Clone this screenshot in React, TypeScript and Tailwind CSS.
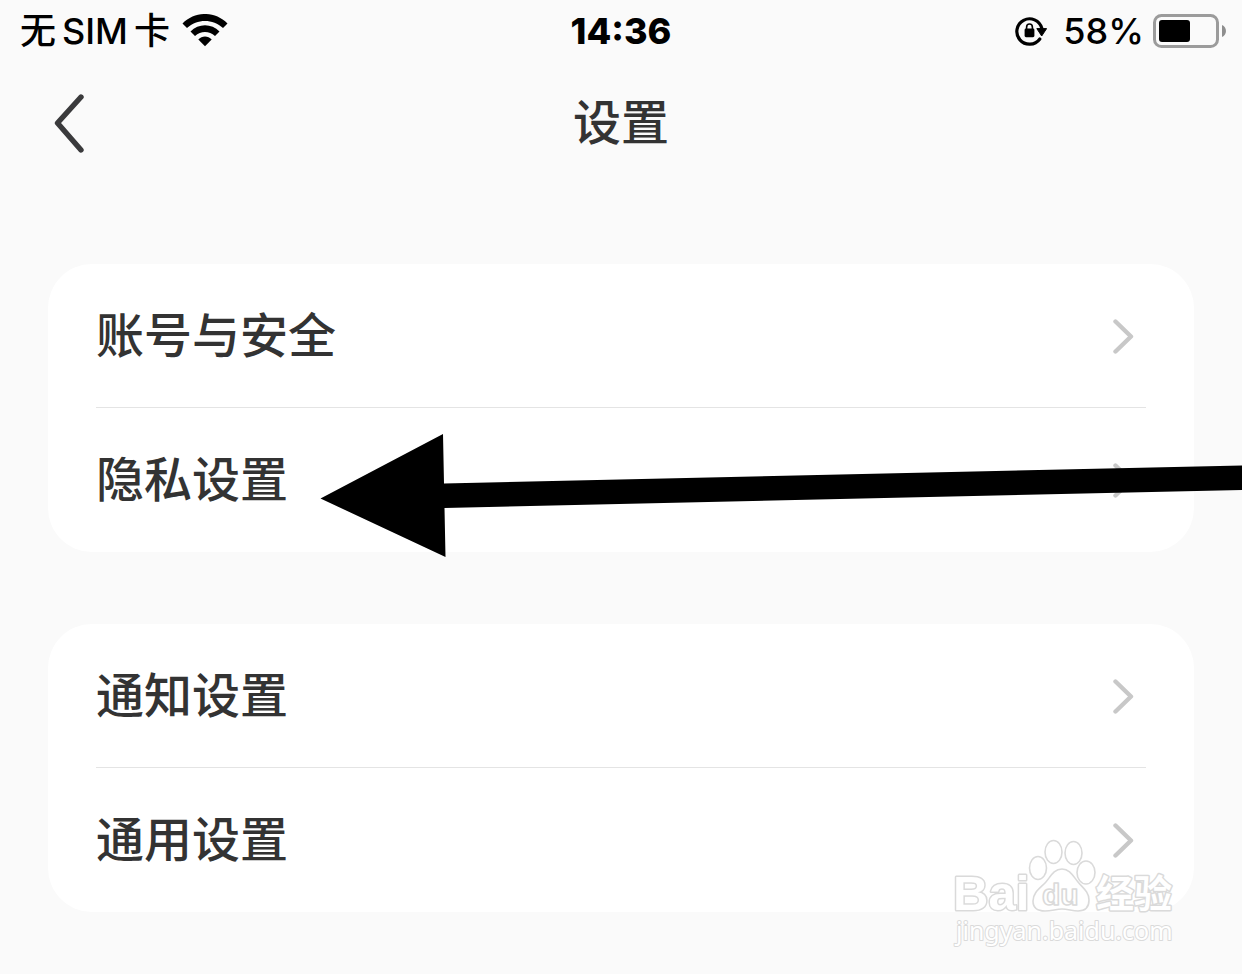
import React from 'react';

type RowItem = {
  label: string;
  href: string;
};

const groups: RowItem[][] = [
  [
    { label: '账号与安全', href: '#account' },
    { label: '隐私设置', href: '#privacy' },
  ],
  [
    { label: '通知设置', href: '#notifications' },
    { label: '通用设置', href: '#general' },
  ],
];

const WifiIcon = () => (
  <svg viewBox="0 0 46 34" className="w-[46px] h-[34px]" aria-hidden="true">
    <path d="M0.5 9.5C13-3.2 33-3.2 45.5 9.5L41 14C31 4.6 15 4.6 5 14Z" />
    <path d="M8.5 17.5C16.5 9.3 29.5 9.3 37.500 17.500L33 22C27.300 16.500 18.700 16.500 13 22Z" />
    <path d="M16.3 25.5C20 21.600 26 21.600 29.700 25.500L23 32.300Z" />
  </svg>
);

const RotationLockIcon = () => (
  <svg viewBox="0 0 32 30" className="w-8 h-[30px]" fill="none" aria-hidden="true">
    <path d="M26.8 12.2A12.7 12.7 0 1 0 24.8 23" stroke="#000" strokeWidth="3.2" strokeLinecap="round" />
    <path d="M21.8 12.6H31.6L26.7 20Z" fill="#000" stroke="#000" strokeWidth="1" strokeLinejoin="round" />
    <path d="M11.6 13V11.2a2.9 3.2 0 0 1 5.8 0V13" stroke="#000" strokeWidth="1.6" />
    <rect x="9.6" y="12.6" width="9.8" height="8.6" rx="1.4" fill="#000" />
  </svg>
);

const BatteryIcon = () => (
  <svg viewBox="0 0 74 34" className="w-[74px] h-[34px]" aria-hidden="true">
    <rect x="2.5" y="1.5" width="63" height="31" rx="7" fill="none" stroke="#9b9b9b" strokeWidth="3" />
    <rect x="7" y="6" width="31" height="22" rx="3" />
    <path d="M70 11C75.3 13 75.3 21 70 23Z" fill="#8e8e8e" />
  </svg>
);

const RowChevron = () => (
  <svg viewBox="0 0 22 36" className="w-[22px] h-9" fill="none" aria-hidden="true">
    <path d="M3.5 3.5L19 18.5L3.5 33.5" stroke="#c8c8c8" strokeWidth="4.4" strokeLinecap="round" strokeLinejoin="round" />
  </svg>
);

const StatusBar = () => (
  <div className="grid grid-cols-3 items-center h-[62px] px-4 text-4xl text-black">
    <div className="flex items-center gap-3 pl-1 font-medium">
      <div className="flex gap-1.5 whitespace-nowrap">
        <span>无</span>
        <span>SIM</span>
        <span>卡</span>
      </div>
      <WifiIcon />
    </div>
    <time className="text-center font-extrabold">14:36</time>
    <div className="flex items-center justify-end gap-2">
      <RotationLockIcon />
      <span className="pl-2 font-medium">58%</span>
      <BatteryIcon />
    </div>
  </div>
);

const Header = () => (
  <header className="grid grid-cols-3 items-center h-[122px] px-12">
    <button type="button" aria-label="返回" className="justify-self-start p-1">
      <svg viewBox="0 0 36 60" className="w-9 h-[60px]" fill="none" aria-hidden="true">
        <path d="M29 4L5.5 30L29 57" stroke="#3a3a3c" strokeWidth="5.4" strokeLinecap="round" strokeLinejoin="round" />
      </svg>
    </button>
    <h1 className="text-center text-5xl font-medium">设置</h1>
  </header>
);

const SettingsGroup = ({ items }: { items: RowItem[] }) => (
  <ul className="px-12 bg-white rounded-[44px] divide-y divide-[#e4e4e4]">
    {items.map((item) => (
      <li key={item.href} className="h-36">
        <a href={item.href} className="flex items-center justify-between h-full pr-3 text-5xl font-medium">
          {item.label}
          <RowChevron />
        </a>
      </li>
    ))}
  </ul>
);

const PointerArrow = () => (
  <svg viewBox="0 0 922 124" className="absolute left-80 top-[434px] w-[922px] h-[124px] max-w-none pointer-events-none" aria-hidden="true">
    <path d="M0.5 64.5L123 0L124 49.5L922 31.5V56L124.5 74L125.5 123Z" />
  </svg>
);

const Watermark = () => (
  <svg
    viewBox="0 0 230 112"
    className="absolute right-4 -bottom-9 w-[230px] h-28 pointer-events-none"
    fill="#fff"
    stroke="#dadada"
    strokeWidth="1.6"
    strokeLinejoin="round"
  >
    <g strokeWidth="3" paintOrder="stroke" fontWeight="bold">
      <text x="5" y="74" fontSize="49" fontFamily="Liberation Sans">Bai</text>
      <text x="148" y="71" fontSize="38" fontFamily="Noto Sans CJK SC, sans-serif">经验</text>
    </g>
    <ellipse cx="90" cy="32" rx="8.5" ry="11.5" />
    <ellipse cx="105.5" cy="16" rx="8.5" ry="11.5" />
    <ellipse cx="125.5" cy="17" rx="8.5" ry="11.5" />
    <ellipse cx="138" cy="36.5" rx="9" ry="11.5" />
    <path d="M114 33C105 33 102 42 97 47C91 53 85 57 85 65C85 72 90 75 97 75C104 75 108 73 114 73C120 73 124 75 130 75C137 75 141 71 141 64C141 56 135 52 130 46C125 40 122 33 114 33Z" />
    <text x="94" y="69" fontSize="30" fontFamily="Liberation Sans" fontWeight="bold">du</text>
    <text x="8" y="104" fontSize="25" fontFamily="Noto Sans, sans-serif" strokeWidth="2" paintOrder="stroke">
      jingyan.baidu.com
    </text>
  </svg>
);

const App = () => {
  return (
    <div className="relative min-h-screen overflow-hidden bg-[#fafafa] text-[#333] font-['Inter','Noto_Sans_CJK_SC',sans-serif]">
      <StatusBar />
      <Header />
      <main className="flex flex-col gap-18 px-12 pt-20 pb-15">
        {groups.map((items, index) => (
          <div key={index} className="relative">
            <SettingsGroup items={items} />
            {index === groups.length - 1 && <Watermark />}
          </div>
        ))}
      </main>
      <PointerArrow />
    </div>
  );
};

export default App;
